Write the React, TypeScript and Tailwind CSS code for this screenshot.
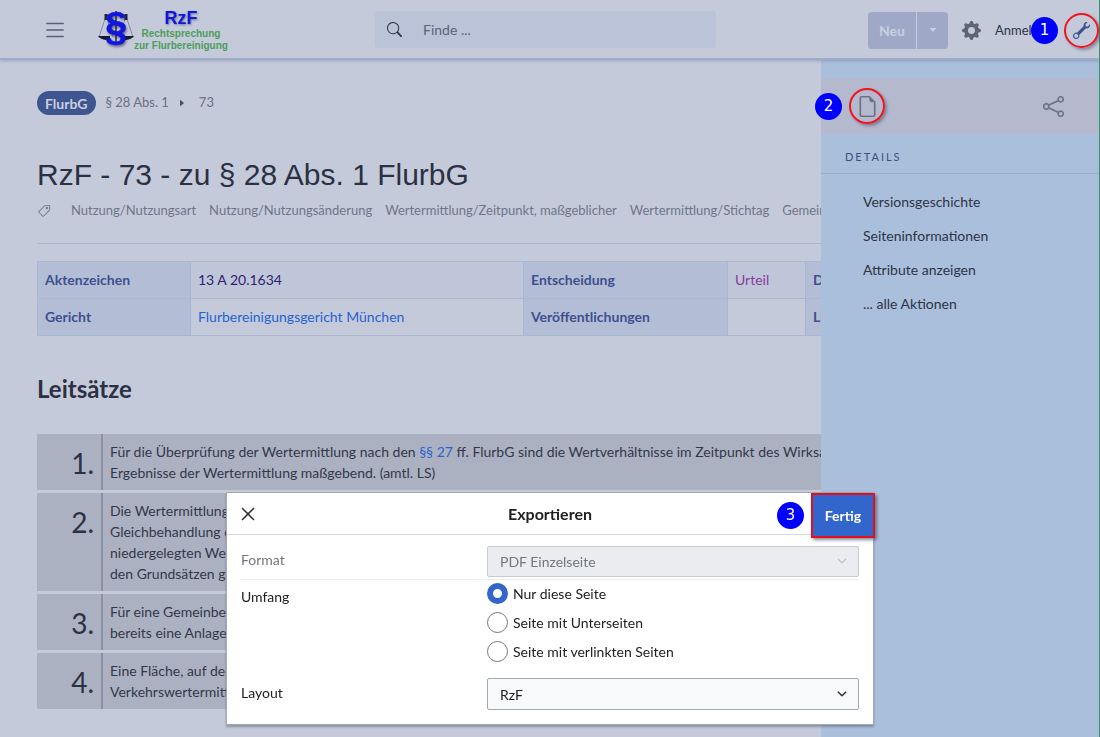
import { useState, type ReactNode } from "react";
import clsx from "clsx";
import {
  BsCaretDownFill,
  BsChevronDown,
  BsFileEarmark,
  BsGearFill,
  BsList,
  BsSearch,
  BsShare,
  BsTag,
  BsWrench,
  BsXLg,
} from "react-icons/bs";

const KEYWORDS = [
  "Nutzung/Nutzungsart",
  "Nutzung/Nutzungsänderung",
  "Wertermittlung/Zeitpunkt, maßgeblicher",
  "Wertermittlung/Stichtag",
  "Gemeinbedarf",
];

const ACTIONS = [
  "Versionsgeschichte",
  "Seiteninformationen",
  "Attribute anzeigen",
  "... alle Aktionen",
];

const SCOPES = [
  { id: "page", label: "Nur diese Seite" },
  { id: "subpages", label: "Seite mit Unterseiten" },
  { id: "linked", label: "Seite mit verlinkten Seiten" },
];

const ABBR = "border-b border-dotted border-[#9aa6dc]";

const PRINCIPLES: ReactNode[][] = [
  [
    <>
      Für die Überprüfung der Wertermittlung nach den{" "}
      <a href="#p27" className="text-[#2d63cf]">
        §§ 27
      </a>{" "}
      <span className={ABBR}>ff.</span> <span className={ABBR}>FlurbG</span> sind die
      Wertverhältnisse im Zeitpunkt des Wirksamwerdens der
    </>,
    "Ergebnisse der Wertermittlung maßgebend. (amtl. LS)",
  ],
  [
    "Die Wertermittlung dient der",
    "Gleichbehandlung der",
    "niedergelegten Wertgleichheit",
    "den Grundsätzen gerecht",
  ],
  ["Für eine Gemeinbedarfsfläche", "bereits eine Anlage"],
  ["Eine Fläche, auf der", "Verkehrswertermittlung"],
];

function Badge({ children, className }: { children: ReactNode; className?: string }) {
  return (
    <span
      className={clsx(
        "absolute z-10 flex size-[27px] items-center justify-center rounded-full bg-[#0000ff] font-['DejaVu_Sans',sans-serif] text-[15px] leading-none text-white",
        className
      )}
    >
      {children}
    </span>
  );
}

function Logo() {
  return (
    <a href="#home" className="flex items-start pt-0.5" aria-label="RzF">
      <svg viewBox="0 0 36 40" className="h-10 w-9 overflow-visible" aria-hidden="true">
        <g stroke="#6a7086" strokeWidth="0.7" fill="none">
          <path d="M8 7 L1 28 M8 7 L15 28 M28 7 L21 28 M28 7 L35 28" />
        </g>
        <path d="M7 7 Q18 4 29 7" stroke="#22263a" strokeWidth="1.4" fill="none" />
        <path d="M6.5 5 h3 v6 h-3Z M26.5 5 h3 v6 h-3Z" fill="#22263a" />
        <path d="M18 2 V36" stroke="#151a30" strokeWidth="1.4" />
        <path d="M0 27 H12 V31 Q10 31.5 8 31 Q2 30 0 27Z" fill="#151a30" />
        <path d="M24 27 H36 Q34 30 28 31 Q26 31.5 24 31Z" fill="#151a30" />
        <text
          x="18"
          y="31"
          textAnchor="middle"
          fontFamily="Liberation Sans, sans-serif"
          fontWeight="bold"
          fontSize="40"
          fill="#1016dd"
          stroke="#1016dd"
          strokeWidth="0.5"
          className="drop-shadow-[1px_2px_1px_rgba(30,30,60,0.5)]"
        >
          §
        </text>
      </svg>
      <span className="flex flex-col items-center font-['Liberation_Sans',sans-serif] font-bold">
        <span className="text-[18px] leading-[19px] text-[#1016dd] drop-shadow-[1px_1px_1px_rgba(30,30,60,0.5)]">
          RzF
        </span>
        <span className="text-center text-[10px] leading-[12px] text-[#4b9e58]">
          Rechtsprechung
          <br />
          zur Flurbereinigung
        </span>
      </span>
    </a>
  );
}

function Header() {
  return (
    <header className="relative z-10 flex h-[60px] shrink-0 items-center border-b-2 border-[#a0aac9] bg-[#c5cadb] shadow-[0_1px_3px_rgba(110,125,170,0.5)]">
      <div className="flex w-[375px] shrink-0 items-center pl-[42px]">
        <button type="button" aria-label="Menü" className="mr-[30px] pt-0.5 text-[#5b6175]">
          <BsList className="size-[26px]" />
        </button>
        <Logo />
      </div>
      <label className="flex h-[37px] w-[341px] items-center rounded bg-[#bac3d7] pl-3">
        <BsSearch className="size-[15px] text-[#2d3445]" />
        <input
          type="text"
          aria-label="Suche"
          placeholder="Finde ..."
          className="ml-[21px] min-w-0 flex-1 bg-transparent text-[14px] outline-none placeholder:text-[#5b6378]"
        />
      </label>
      <div className="ml-auto flex items-center pt-0.5">
        <div className="mr-[14px] flex h-[37px] overflow-hidden rounded bg-[#9fa9c7] text-[#c9cfe0]">
          <button type="button" className="w-12 text-[14px] font-bold">
            Neu
          </button>
          <button
            type="button"
            aria-label="Weitere"
            className="flex w-8 items-center justify-center border-l border-[#c5cadb]"
          >
            <BsCaretDownFill className="size-2" />
          </button>
        </div>
        <button type="button" aria-label="Einstellungen" className="mr-[14px] text-[#5f6475]">
          <BsGearFill className="size-[19px]" />
        </button>
        <div className="relative flex w-[69px] items-center">
          <a href="#login" className="pt-0.5 text-[13px] text-[#2d3445]">
            Anmelden
          </a>
          <Badge className="left-9">1</Badge>
        </div>
        <button
          type="button"
          aria-label="Werkzeuge"
          className="flex size-[35px] items-center justify-center rounded-full border-2 border-[#f0141e] text-[#3b528e] shadow-[2px_2px_3px_rgba(70,75,95,0.5)]"
        >
          <BsWrench className="size-[17px] -scale-x-100" />
        </button>
      </div>
    </header>
  );
}

function Sidebar() {
  return (
    <aside className="w-[278px] shrink-0 bg-[#aabfdc] pt-[18px]">
      <div className="relative flex h-14 items-center justify-between rounded bg-[#b4b9ce] pr-[35px] pl-7 text-[#6a7082]">
        <Badge className="-left-1.5">2</Badge>
        <button
          type="button"
          aria-label="Seite"
          className="flex size-9 items-center justify-center rounded-full border-2 border-[#f0141e] shadow-[2px_2px_3px_rgba(70,75,95,0.5)]"
        >
          <BsFileEarmark className="size-[21px]" strokeWidth="0.2" />
        </button>
        <button type="button" aria-label="Teilen">
          <BsShare className="size-[21px]" strokeWidth="0.2" />
        </button>
      </div>
      <h2 className="border-b border-[#9aaccb] pt-[15px] pb-2 pl-6 text-[11px] leading-4 tracking-[2px] text-[#3d4f80]">
        DETAILS
      </h2>
      <ul className="pt-[11px] pl-[42px] text-[14px] text-[#2d3445]">
        {ACTIONS.map((action) => (
          <li key={action} className="leading-[34px]">
            <a href="#action">{action}</a>
          </li>
        ))}
      </ul>
    </aside>
  );
}

function MetaTable() {
  const cell = "h-[37px] border border-[#a9b7d2] px-[7px] pb-0.5 text-left";
  const head = clsx(cell, "bg-[#b3bed6] font-bold text-[#3f4f8f]");
  return (
    <table className="w-[930px] table-fixed border-collapse text-[14px]">
      <colgroup>
        <col className="w-[153px]" />
        <col className="w-[333px]" />
        <col className="w-[204px]" />
        <col className="w-[78px]" />
        <col />
      </colgroup>
      <tbody>
        <tr className="bg-[#bfc6da]">
          <th className={head}>Aktenzeichen</th>
          <td className={clsx(cell, "text-[#2f1e6e]")}>13 A 20.1634</td>
          <th className={head}>Entscheidung</th>
          <td className={cell}>
            <a href="#urteil" className="text-[#8a3c9c]">
              Urteil
            </a>
          </td>
          <th className={head}>Datum</th>
        </tr>
        <tr>
          <th className={head}>Gericht</th>
          <td className={cell}>
            <a href="#gericht" className="text-[#2563cf]">
              Flurbereinigungsgericht München
            </a>
          </td>
          <th className={head}>Veröffentlichungen</th>
          <td className={cell}></td>
          <th className={head}>Lieferung</th>
        </tr>
      </tbody>
    </table>
  );
}

function Article() {
  return (
    <main className="min-w-0 flex-1 overflow-hidden pt-[30px] pl-[37px] whitespace-nowrap">
      <nav className="flex h-[26px] items-center text-[13px] text-[#6a7082]">
        <a
          href="#flurbg"
          className="mr-[10px] flex h-6 items-center rounded-full bg-[#3f5590] px-2 text-[14px] font-bold text-[#c9cfe0]"
        >
          FlurbG
        </a>
        <a href="#p28">§ 28 Abs. 1</a>
        <BsCaretDownFill className="mx-[9px] size-2 -rotate-90 text-[#4d5366]" />
        <a href="#p73" className="ml-1">
          73
        </a>
      </nav>
      <h1 className="mt-[41px] font-['Liberation_Sans',sans-serif] text-[30px] leading-9 text-[#2b3142]">
        RzF - 73 - zu § 28 Abs. 1 FlurbG
      </h1>
      <div className="mt-2 flex h-5 items-center gap-[13px] text-[13px] text-[#6f7588]">
        <BsTag className="mr-[7px] size-[14px] shrink-0 -scale-x-100" />
        {KEYWORDS.map((keyword) => (
          <a key={keyword} href="#keyword">
            {keyword}
          </a>
        ))}
      </div>
      <hr className="mt-[22px] mb-[17px] border-[#aeb5ca]" />
      <MetaTable />
      <h2 className="mt-[35px] text-[24px] leading-9 font-bold text-[#2b3142]">Leitsätze</h2>
      <ol className="mt-[27px] flex flex-col gap-[3px] text-[14px] leading-[21px] text-[#32384a]">
        {PRINCIPLES.map((lines, index) => (
          <li key={index} className="flex bg-[#acb1c2]">
            <span className="w-[66px] shrink-0 border-r-2 border-[#8b90a3] pt-[11px] pr-[7px] text-right text-[28px] leading-9 text-[#2b3142]">
              {index + 1}.
            </span>
            <p className="pt-[7px] pb-[7px] pl-[7px]">
              {lines.map((line, i) => (
                <span key={i} className="block">
                  {line}
                </span>
              ))}
            </p>
          </li>
        ))}
      </ol>
    </main>
  );
}

function ExportDialog() {
  const [scope, setScope] = useState("page");
  const row = "grid grid-cols-[246px_1fr]";
  return (
    <section
      role="dialog"
      aria-labelledby="export-title"
      className="fixed bottom-3 left-1/2 z-20 w-[648px] -translate-x-1/2 border border-[#a2a9b1] bg-white text-[14px] text-[#202122] shadow-[0_2px_2px_rgba(60,65,85,0.4)]"
    >
      <div className="flex h-[42px] items-center justify-between border-b border-[#d5d8dd]">
        <button type="button" aria-label="Schließen" className="w-[114px] pl-[13px]">
          <BsXLg className="size-4" strokeWidth="0.6" />
        </button>
        <h2 id="export-title" className="text-[16px] font-bold">
          Exportieren
        </h2>
        <div className="relative flex w-[114px] items-center justify-end pt-1">
          <Badge className="left-[18px]">3</Badge>
          <button
            type="button"
            className="-mr-0.5 h-[45px] w-16 border-2 border-[#e0101c] bg-[#3366cc] text-[14px] font-bold text-white shadow-[2px_2px_3px_rgba(60,65,85,0.6)]"
          >
            Fertig
          </button>
        </div>
      </div>
      <form className="px-[14px] pt-[11px] pb-[14px]">
        <div className={clsx(row, "border-b border-[#eaecf0] pb-0.5")}>
          <label htmlFor="format" className="pt-[3px] text-[#72777d]">
            Format
          </label>
          <div className="relative">
            <select
              id="format"
              disabled
              className="h-[31px] w-full appearance-none rounded-xs border border-[#c8ccd1] bg-[#eaecf0] px-3 text-[#72777d] opacity-100"
            >
              <option>PDF Einzelseite</option>
            </select>
            <BsChevronDown
              className="pointer-events-none absolute top-[10px] right-3 size-[10px] text-[#b4b8be]"
              strokeWidth="1"
            />
          </div>
        </div>
        <fieldset className={clsx(row, "pt-[3px]")} aria-labelledby="scope-label">
          <span id="scope-label" className="pt-[3px]">
            Umfang
          </span>
          <div className="flex flex-col gap-2">
            {SCOPES.map(({ id, label }) => (
              <label key={id} className="flex h-[21px] items-center gap-[5px]">
                <input
                  type="radio"
                  name="scope"
                  checked={scope === id}
                  onChange={() => setScope(id)}
                  className="size-[21px] appearance-none rounded-full border border-[#72777d] bg-white checked:border-[6px] checked:border-[#3366cc]"
                />
                {label}
              </label>
            ))}
          </div>
        </fieldset>
        <div className={clsx(row, "pt-4")}>
          <label htmlFor="layout" className="pt-1">
            Layout
          </label>
          <div className="relative">
            <select
              id="layout"
              className="h-8 w-full appearance-none rounded-xs border border-[#a2a9b1] bg-[#f8f9fa] px-3"
            >
              <option>RzF</option>
            </select>
            <BsChevronDown
              className="pointer-events-none absolute top-[11px] right-3 size-[10px]"
              strokeWidth="1.6"
            />
          </div>
        </div>
      </form>
    </section>
  );
}

export default function App() {
  return (
    <div className="flex min-h-screen flex-col border-r border-[#2f9a5a] bg-[#c5cadb] font-['Lato',sans-serif]">
      <Header />
      <div className="flex flex-1">
        <Article />
        <Sidebar />
      </div>
      <ExportDialog />
    </div>
  );
}
